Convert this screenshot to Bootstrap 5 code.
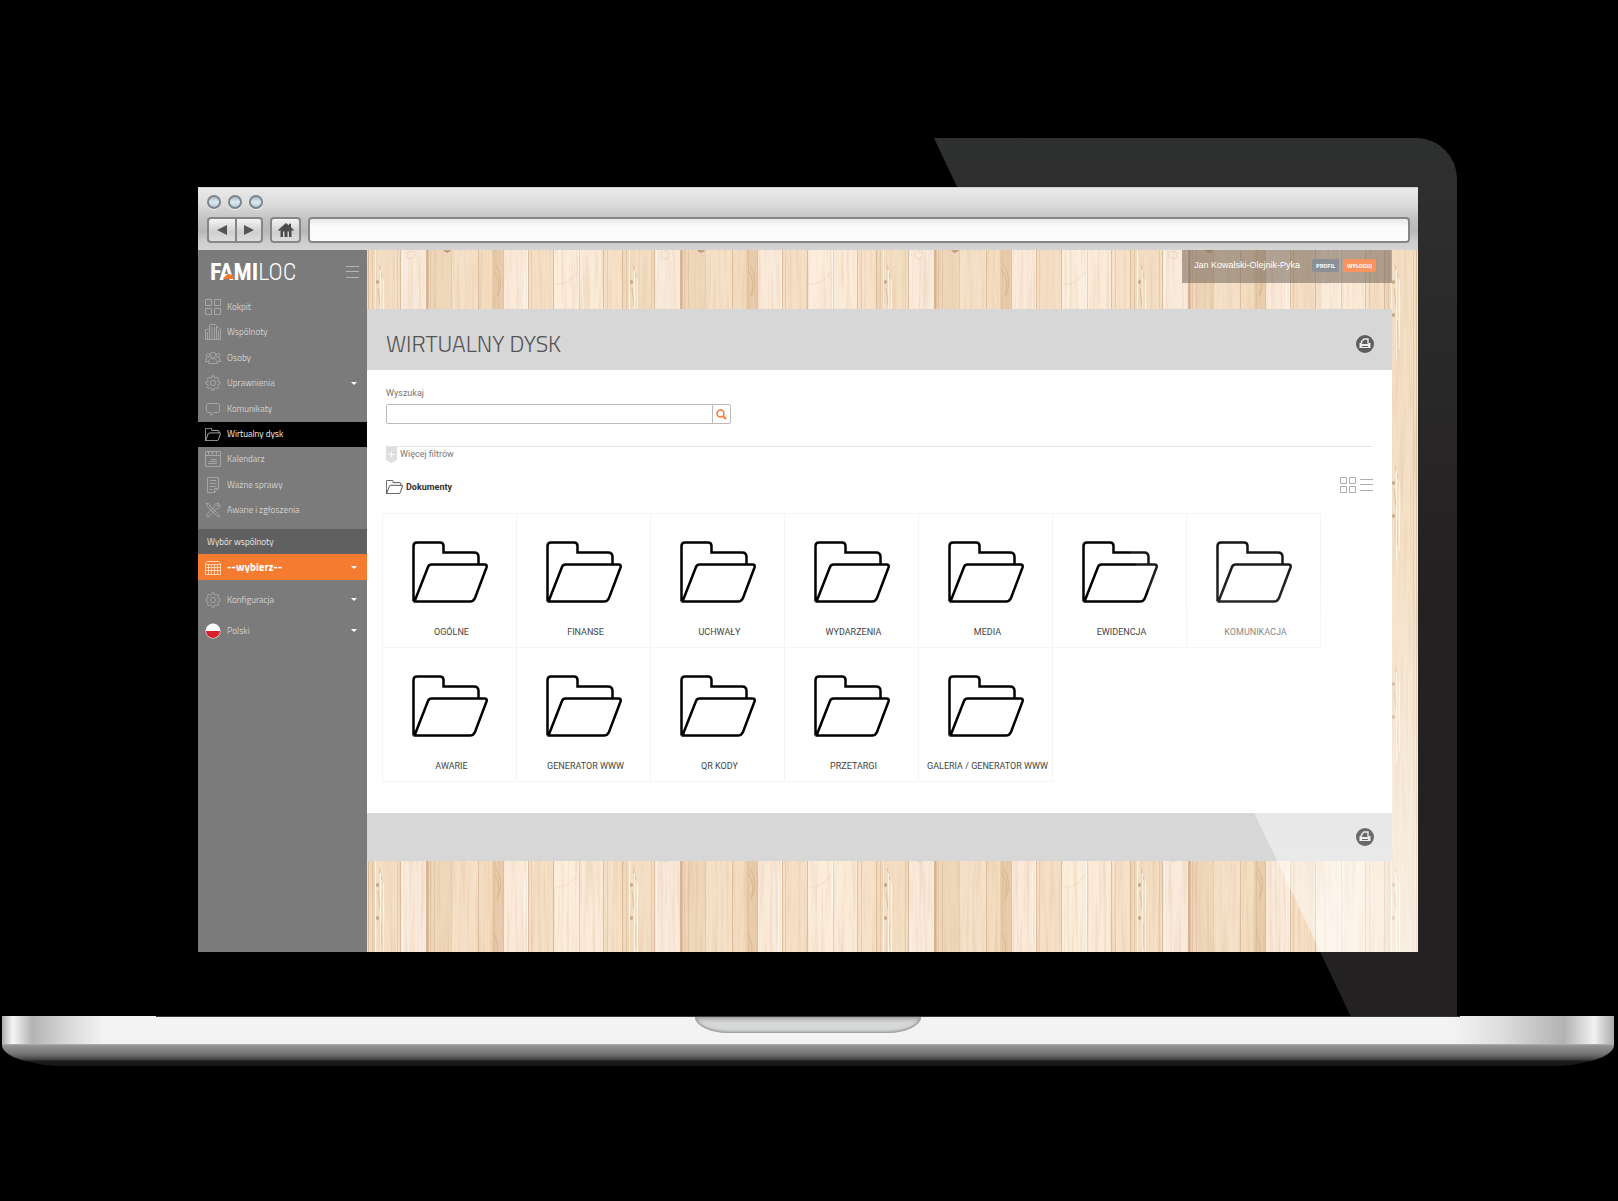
<!DOCTYPE html>
<html lang="pl">
<head>
<meta charset="utf-8">
<meta name="viewport" content="width=device-width, initial-scale=1">
<title>Familoc – Wirtualny dysk</title>
<link href="https://cdn.jsdelivr.net/npm/bootstrap@5.3.0/dist/css/bootstrap.min.css" rel="stylesheet">
<style>
body{background:#000;font:9px/12px "Liberation Sans",Arial,sans-serif;color:#444}
svg{display:block;flex:none}
a{text-decoration:none;color:inherit}
.laptop{margin:138px 4px 0 2px}
.lid{margin:0 157px;padding:49px 39px 64px;background:#000;border-radius:41px 41px 0 0}
.lid-shine{inset:0;border-radius:0 41px 0 0;background:linear-gradient(#2e302f,#2b2a2a 20%,#242122 50%);clip-path:polygon(59.7% 0,100% 0,100% 100%,91.8% 100%)}
.screen-shine{inset:0;pointer-events:none;background:linear-gradient(transparent 25%,rgba(255,255,255,.08) 47%,rgba(255,255,255,.42) 80%,rgba(255,255,255,.5));clip-path:polygon(62.2% 0,100% 0,100% 100%,92% 100%)}

/* browser window */
.chrome{height:63px;padding:7px 8px 7px 9px;border-top:1px solid #cfcfcf;background:linear-gradient(#eaeaea,#dcdcdc 25%,#c3c3c3 50%,#b7b7b7 70%,#cbcbcb 84%,#d4d4d4)}
.chrome-row{gap:7px}
.dot{width:14px;height:14px;border:2px solid #7d858b;border-radius:50%;background:linear-gradient(#a9bcc8,#dcebf2 50%,#b4cbd8);box-shadow:0 1px 0 #f2f2f2}
.tool{height:26px;padding:0;border:2px solid #84868a;border-radius:4px;background:linear-gradient(#f4f4f4,#cfcfcf 60%,#dedede);display:flex;align-items:center;justify-content:center}
.tool-nav{width:28px}
.tool-home{width:31px}
.address{height:26px;border:2px solid #84868a;border-radius:4px;background:linear-gradient(#e9e9e9,#fafafa 35%,#fdfdfd);font-size:12px;padding:0 8px;min-width:0}

/* sidebar */
.side{width:169px;flex:none;background:#7b7b7b;color:#d0d0d0;font-family:"Titillium Web",Roboto,"Liberation Sans",sans-serif;padding-bottom:24px}
.side-head{height:44px;padding:0 8px 0 12px}
.brand-word{font:700 24px/24px "Liberation Sans Narrow","Roboto Condensed",Roboto,sans-serif;color:#fff}
.brand-word span{font-weight:300}
.brand-roof{left:13px;top:14px}
.plain{border:0;background:none;padding:0;color:inherit}
.menu{min-height:229px}
.entry{padding:0 10px 0 7px;gap:6px;min-height:25px}
.entry.current{background:#000;color:#f2f2f2}
.entry .glyph{stroke:#a6a6a6}
.entry.current .glyph{stroke:#c4c4c4}
.entry.tall{min-height:31px}
.pick-label{height:25px;margin-top:6px;padding-left:9px;background:#606060;color:#e4e4e4}
.pick{background:#f57b30;color:#fff;min-height:26px;margin-bottom:4px}
.pick .glyph{stroke:#ffd2b0}
.side select{appearance:none;border:0;background:none;color:inherit;font:inherit;padding:0;flex:1;min-width:0}
.side .pick select{font-size:11px;font-weight:700}
.arrow{width:0;height:0;border:3px solid transparent;border-top-color:#fff;border-bottom:0}

/* content */
.stage{min-width:0;padding:0 26px 91px 0;background:#f8e6d0}
.wood{inset:0;width:100%;height:100%}
.top-strip{height:59px}
.user-box{height:33px;padding:9px 16px 0 12px;background:rgba(118,105,92,.56);color:#fff}
.mini{height:13px;border:0;border-radius:2px;padding:0 4px;font:700 6px/13px "Titillium Web","Open Sans",sans-serif;color:#fff;background:#8c8f95}
.mini-out{background:#fb9360}
.pane-head{min-height:61px;padding:8px 18px 0 19px;background:#d7d7d7}
.pane-head h1{font:300 23px/30px "Titillium Web",Roboto,sans-serif;color:#555;margin:0}
.pane-body{background:#fff;padding:16px 19px 32px;font-family:Roboto,"Liberation Sans",sans-serif}
.pane-foot{min-height:48px;padding:0 18px;background:#d7d7d7}
.over-shine{position:relative;z-index:1;opacity:.9}
.find-label{color:#777;line-height:14px;margin-bottom:4px}
.find{max-width:345px;height:20px;border:1px solid #bbb;border-radius:2px}
.find input{border:0;min-width:0;padding:0 4px}
.find button{width:18px;border:0;border-left:1px solid #bbb;background:none;padding:0 0 0 3px}
.filters{margin-top:22px;border-top:1px solid #e6e6e6;gap:3px;color:#777;line-height:14px}
.path-row{margin-top:13px;min-height:17px}
.path-link{gap:3px;line-height:14px;color:#333}
.tiles{margin:19px -8px 0 -3px}
.tile{width:135px;height:135px;margin:0 0 -1px -1px;border:1px solid #f4f4f4;padding:27px 0 0 4px;color:#444}
.tile span{margin-top:23px;white-space:nowrap}
.tile svg{margin-left:-4px}
.tile.faded{color:#6a6a6a}

/* laptop base */
.deck{height:29px;border-bottom:1px solid #aaa;background:linear-gradient(90deg,#aaa,#f2f2f2 10px,#f2f2f2 12px,#b4b4b4 30px,#d8d8d8 66px,#f3f3f3 102px,#f3f3f3 calc(100% - 160px),#dcdcdc calc(100% - 110px),#b2b2b2 calc(100% - 50px),#f2f2f2 calc(100% - 20px),#aaa)}
.hinge{height:1px;margin:0 154px;background:#3a3a3a}
.notch{width:226px;height:16px;border-radius:0 0 34px 34px/0 0 16px 16px;background:#d7d9d8;box-shadow:inset 0 2px 5px #999,inset 0 -1px 3px #888}
.belly{height:21px;border-radius:0 0 64px 64px/0 0 21px 21px;background:linear-gradient(#969696,#707070 45%,#444 68%,#1a1a1a 78%,#181818)}
</style>
<script src="https://cdn.jsdelivr.net/npm/bootstrap@5.3.0/dist/js/bootstrap.bundle.min.js"></script>
</head>
<body>
<svg width="0" height="0" class="position-absolute" aria-hidden="true">
  <symbol id="folder" viewBox="0 0 76 62"><path d="M1.5 60.5V5q0-3.5 3.5-3.5h23q3.500 0 3.500 3.500v6.500H62q4.500 0 4.500 4.500v7.500M1.500 60.500H58q3.500 0 5-3.500l11.500-30.500q1-3-2-3H19.500q-2.500 0-3.500 2.500L2.500 60.500" fill="none"/></symbol>
  <symbol id="cog" viewBox="0 0 16 16"><path d="M13.300 6.700L15.100 6.800 15.100 9.200 13.300 9.300 12.700 10.800 13.900 12.100 12.100 13.900 10.800 12.700 9.300 13.300 9.200 15.100 6.800 15.100 6.700 13.300 5.200 12.700 3.900 13.900 2.100 12.100 3.300 10.800 2.700 9.300 .9 9.200 .9 6.800 2.700 6.700 3.300 5.200 2.100 3.900 3.900 2.100 5.200 3.300 6.700 2.700 6.800 .9 9.200 .9 9.300 2.700 10.800 3.300 12.100 2.100 13.900 3.900 12.700 5.200z" fill="none"/><circle cx="8" cy="8" r="2.600" fill="none"/></symbol>
  <symbol id="squares" viewBox="0 0 16 16"><path d="M.5.5h6v6h-6zM9.500.5h6v6h-6zM.5 9.500h6v6h-6zM9.500 9.500h6v6h-6z" fill="none"/></symbol>
  <symbol id="printer" viewBox="0 0 18 18"><circle cx="9" cy="9" r="9" fill="#5d5d5d"/><path d="M5.500 8.500V6.500l2.500-2.500h4v4.500" fill="none" stroke="#eee" stroke-width="1.400"/><path d="M3.500 8h2l.5 1h6l.5-1h2v5h-11z" fill="#eee"/><path d="M6 11.500h6" stroke="#5d5d5d"/></symbol>
</svg>

<div class="laptop">
  <div class="lid position-relative">
    <div class="lid-shine position-absolute"></div>
    <div class="position-relative">
      <header class="chrome">
        <div class="chrome-row d-flex mb-2"><i class="dot"></i><i class="dot"></i><i class="dot"></i></div>
        <div class="chrome-row d-flex">
          <div class="btn-group">
            <button class="tool tool-nav rounded-end-0 border-end-0" aria-label="Wstecz"><svg width="10" height="10"><path d="M10 0v10L0 5z" fill="#555"/></svg></button>
            <button class="tool tool-nav rounded-start-0" aria-label="Dalej"><svg width="10" height="10"><path d="M0 0v10l10-5z" fill="#555"/></svg></button>
          </div>
          <button class="tool tool-home" aria-label="Strona główna"><svg width="16" height="14" viewBox="0 0 16 14" fill="#4c4c4c"><path d="M8 0l3 2.500V.8h2v3.500L16 7l-1 1-1.500-1V14H11V8.500H9.500V14h-3V8.500H5V14H2.500V7L1 8 0 7z"/></svg></button>
          <input class="address flex-fill" type="text" aria-label="Adres strony">
        </div>
      </header>

      <div class="d-flex">
        <aside class="side">
          <div class="side-head d-flex align-items-center justify-content-between">
            <a href="#" class="brand-word position-relative">FAMI<span>LOC</span><svg class="brand-roof position-absolute" width="12" height="5"><path d="M0 5Q3 0 6 0t6 5z" fill="#f57b30"/></svg></a>
            <button class="plain" aria-label="Zwiń menu"><svg width="13" height="12" stroke="#b5b5b5"><path d="M0 .5h13M0 5.500h13M0 11.500h13"/></svg></button>
          </div>
          <nav class="menu d-flex flex-column">
            <a href="#" class="entry flex-fill d-flex align-items-center"><svg class="glyph" width="16" height="16"><use href="#squares"/></svg>Kokpit</a>
            <a href="#" class="entry flex-fill d-flex align-items-center"><svg class="glyph" width="16" height="16" fill="none"><path d="M4.500 15.500V1.500L6 .5h4l1.500 1v14M4 5.500H.5v10h15V5l-2-1.500h-2M7 3v12M9.500 3v12M13.500 6v9M2.500 8v7"/></svg>Wspólnoty</a>
            <a href="#" class="entry flex-fill d-flex align-items-center"><svg class="glyph" width="16" height="16" fill="none"><circle cx="8" cy="5" r="2.800"/><circle cx="3" cy="5.500" r="1.800"/><circle cx="13" cy="5.500" r="1.800"/><path d="M3.500 13.500q0-4 3-5 1.500 1 3 0 3 1 3 5zM3.500 11.500h-3q0-3 2-4M12.500 11.500h3q0-3-2-4"/></svg>Osoby</a>
            <button class="plain entry flex-fill d-flex align-items-center"><svg class="glyph" width="16" height="16"><use href="#cog"/></svg>Uprawnienia<i class="arrow ms-auto"></i></button>
            <a href="#" class="entry flex-fill d-flex align-items-center"><svg class="glyph" width="16" height="16" fill="none"><path d="M3 2.500h9.500q2 0 2 2v5q0 2-2 2H9l-3 3v-3H3.500q-2 0-2-2v-5q0-2 2-2z"/></svg>Komunikaty</a>
            <a href="#" class="entry current flex-fill d-flex align-items-center"><svg class="glyph" width="16" height="13" stroke-width="4"><use href="#folder"/></svg>Wirtualny dysk</a>
            <a href="#" class="entry flex-fill d-flex align-items-center"><svg class="glyph" width="16" height="16" fill="none"><path d="M.5.5h15v15H.5zM.5 4.500h15M3.500.5v3M7.500.5v3M11.500.5v3M3 12.500h9M4 10.500h8M6 8.500h6"/></svg>Kalendarz</a>
            <a href="#" class="entry flex-fill d-flex align-items-center"><svg class="glyph" width="16" height="16" fill="none"><path d="M2.500.5h11v11l-4 4h-7zM13.500 11.500h-4v4M4.500 3.500h7M4.500 6.500h7M4.500 9.500h7M4.500 12.500h3"/></svg>Ważne sprawy</a>
            <a href="#" class="entry flex-fill d-flex align-items-center"><svg class="glyph" width="16" height="16" fill="none"><path d="M1 1l3 .8L5 4l5.500 5.500 4 3.500q1 2-1 2.500L9 11 3 5.500zM14 1l-2.500 2.500 1 1L15 2.500q1 4-3.500 4.500L4 14.500q-3 1-2.500-2L9 5.500Q9 1 14 1z"/></svg>Awarie i zgłoszenia</a>
          </nav>
          <label for="community" class="pick-label d-flex align-items-center">Wybór wspólnoty</label>
          <div class="entry pick d-flex align-items-center"><svg class="glyph" width="16" height="15" fill="none"><path d="M.5 14.500v-11l2-2h11l2 2v11zM.5 4.500h15M.5 7.500h15M.5 10.500h15M3.500 4v10M6.500 4v10M9.500 4v10M12.500 4v10"/></svg><select id="community"><option>--wybierz--</option></select><i class="arrow"></i></div>
          <button class="plain entry tall w-100 d-flex align-items-center"><svg class="glyph" width="16" height="16"><use href="#cog"/></svg>Konfiguracja<i class="arrow ms-auto"></i></button>
          <div class="entry tall d-flex align-items-center"><svg width="16" height="16"><circle cx="8" cy="8" r="7.500" fill="#fff"/><path d="M1 8h14a7 7 0 0 1-14 0z" fill="#d7202c"/></svg><select aria-label="Język"><option>Polski</option></select><i class="arrow"></i></div>
        </aside>

        <main class="stage flex-fill position-relative">
          <svg class="wood position-absolute" aria-hidden="true">
            <defs>
              <filter id="fibre" x="0" y="0" width="100%" height="100%"><feTurbulence type="fractalNoise" baseFrequency=".35 .012" numOctaves="3" seed="4"/><feColorMatrix values="0 0 0 0 .66  0 0 0 0 .45  0 0 0 0 .27  1.800 0 0 0 -.78"/></filter>
              <pattern id="planks" x="8" width="254" height="201" patternUnits="userSpaceOnUse">
                <path fill="#f4dfc4" d="M0 0h26v201H0z"/><path fill="#faeadb" d="M26 0h26v201H26z"/><path fill="#efd7ba" d="M52 0h24v201H52z"/><path fill="#f5e1c8" d="M76 0h28v201H76z"/><path fill="#f3dcc0" d="M104 0h13v201h-13z"/><path fill="#e8ccab" d="M117 0h11v201h-11z"/><path fill="#fbeada" d="M128 0h25v201h-25z"/><path fill="#f5dfc5" d="M153 0h26v201h-26z"/><path fill="#fceddc" d="M179 0h25v201h-25z"/><path fill="#fbebd8" d="M204 0h25v201h-25z"/><path fill="#f7e2c9" d="M229 0h18v201h-18z"/><path fill="#f1dabf" d="M247 0h7v201h-7z"/>
                <g fill="none" stroke="#d3b08c"><path d="M25.500 0v201M51.500 0v201M103.500 0v201M128.500 0v201M153.500 0v201M178.500 0v201M228.500 0v201M247.500 0v201" opacity=".7"/><path d="M52.500 0v201" stroke-width="2"/><path d="M55.500 0v201M59.500 0v201M76.500 0v201M119.500 0v201M204.500 0v201M232.500 0v201M251.500 0v201M22.500 0v201M156.500 0v201" opacity=".4"/>
                <path d="M119 20q8 12 3 25M121 15q9 16 1 32M119 80q7 14 2 30M121 125q7 12 0 25M123 160q5 10-3 25M4 15l3 12M3 38l2 18M6 70v24" opacity=".7"/><path d="M180 34q12 2 22-12M182 130q10-6 20-4" opacity=".25"/></g>
                <g stroke="#fff8ee"><path d="M.5 0v201M27.500 0v201M152.500 0v201M203.500 0v201M5.500 20v90M8.500 30v70M149.500 20v110"/></g>
                <g fill="#bb9470" opacity=".8"><ellipse cx="2.500" cy="32" rx="1.500" ry="2"/><ellipse cx="2.500" cy="65" rx="1.500" ry="2"/><path d="M68 0h8q-4 6-8 0z"/></g><g fill="none" stroke="#d9b794" opacity=".35"><circle cx="36" cy="5" r="4"/></g>
              </pattern>
            </defs>
            <rect width="100%" height="100%" fill="url(#planks)"/><rect width="100%" height="100%" filter="url(#fibre)" opacity=".4"/>
          </svg>

          <div class="position-relative">
            <div class="top-strip d-flex justify-content-end align-items-start">
              <div class="user-box d-flex align-items-start"><span class="me-2 pe-1">Jan Kowalski-Olejnik-Pyka</span><button class="mini me-1">PROFIL</button><button class="mini mini-out">WYLOGUJ</button></div>
            </div>
            <section>
              <div class="pane-head d-flex align-items-center justify-content-between"><h1>WIRTUALNY DYSK</h1><button class="plain" aria-label="Drukuj"><svg width="18" height="18"><use href="#printer"/></svg></button></div>
              <div class="pane-body">
                <label for="query" class="find-label d-block">Wyszukaj</label>
                <div class="find d-flex"><input id="query" type="text" class="flex-fill"><button aria-label="Szukaj"><svg width="11" height="11" fill="none" stroke="#f57b30" stroke-width="1.500"><circle cx="4.500" cy="4.500" r="3.500"/><path d="M7 7l3 3" stroke-width="2"/></svg></button></div>
                <a href="#" class="filters d-flex"><svg width="11" height="16"><path d="M0 0h11v13l-5.500 3L0 13z" fill="#dedede"/><path d="M5.500 4.500v6M2.500 7.500h6" stroke="#fff"/></svg>Więcej filtrów</a>
                <div class="path-row d-flex align-items-center justify-content-between">
                  <a href="#" class="path-link d-flex align-items-center fw-bold pt-1"><svg width="17" height="14" stroke="#444" stroke-width="4"><use href="#folder"/></svg>Dokumenty</a>
                  <div class="d-flex align-items-center gap-1"><button class="plain" aria-label="Widok kafelków"><svg width="16" height="16" stroke="#aaa"><use href="#squares"/></svg></button><button class="plain" aria-label="Widok listy"><svg width="13" height="12" stroke="#aaa"><path d="M0 .5h13M0 5.500h13M0 11.500h13"/></svg></button></div>
                </div>
                <div class="tiles d-flex flex-wrap">
                  <a href="#" class="tile d-flex flex-column align-items-center"><svg width="76" height="62" stroke="#000" stroke-width="2.500"><use href="#folder"/></svg><span>OGÓLNE</span></a>
                  <a href="#" class="tile d-flex flex-column align-items-center"><svg width="76" height="62" stroke="#000" stroke-width="2.500"><use href="#folder"/></svg><span>FINANSE</span></a>
                  <a href="#" class="tile d-flex flex-column align-items-center"><svg width="76" height="62" stroke="#000" stroke-width="2.500"><use href="#folder"/></svg><span>UCHWAŁY</span></a>
                  <a href="#" class="tile d-flex flex-column align-items-center"><svg width="76" height="62" stroke="#000" stroke-width="2.500"><use href="#folder"/></svg><span>WYDARZENIA</span></a>
                  <a href="#" class="tile d-flex flex-column align-items-center"><svg width="76" height="62" stroke="#000" stroke-width="2.500"><use href="#folder"/></svg><span>MEDIA</span></a>
                  <a href="#" class="tile d-flex flex-column align-items-center"><svg width="76" height="62" stroke="#000" stroke-width="2.500"><use href="#folder"/></svg><span>EWIDENCJA</span></a>
                  <a href="#" class="tile faded d-flex flex-column align-items-center"><svg width="76" height="62" stroke="#000" stroke-width="2.500"><use href="#folder"/></svg><span>KOMUNIKACJA</span></a>
                  <a href="#" class="tile d-flex flex-column align-items-center"><svg width="76" height="62" stroke="#000" stroke-width="2.500"><use href="#folder"/></svg><span>AWARIE</span></a>
                  <a href="#" class="tile d-flex flex-column align-items-center"><svg width="76" height="62" stroke="#000" stroke-width="2.500"><use href="#folder"/></svg><span>GENERATOR WWW</span></a>
                  <a href="#" class="tile d-flex flex-column align-items-center"><svg width="76" height="62" stroke="#000" stroke-width="2.500"><use href="#folder"/></svg><span>QR KODY</span></a>
                  <a href="#" class="tile d-flex flex-column align-items-center"><svg width="76" height="62" stroke="#000" stroke-width="2.500"><use href="#folder"/></svg><span>PRZETARGI</span></a>
                  <a href="#" class="tile d-flex flex-column align-items-center"><svg width="76" height="62" stroke="#000" stroke-width="2.500"><use href="#folder"/></svg><span>GALERIA / GENERATOR WWW</span></a>
                </div>
              </div>
              <div class="pane-foot d-flex align-items-center justify-content-end"><button class="plain over-shine" aria-label="Drukuj"><svg width="18" height="18"><use href="#printer"/></svg></button></div>
            </section>
          </div>
        </main>
      </div>
      <div class="screen-shine position-absolute"></div>
    </div>
  </div>
  <div class="deck"><div class="hinge"></div><div class="notch mx-auto"></div></div>
  <div class="belly"></div>
</div>
</body>
</html>
